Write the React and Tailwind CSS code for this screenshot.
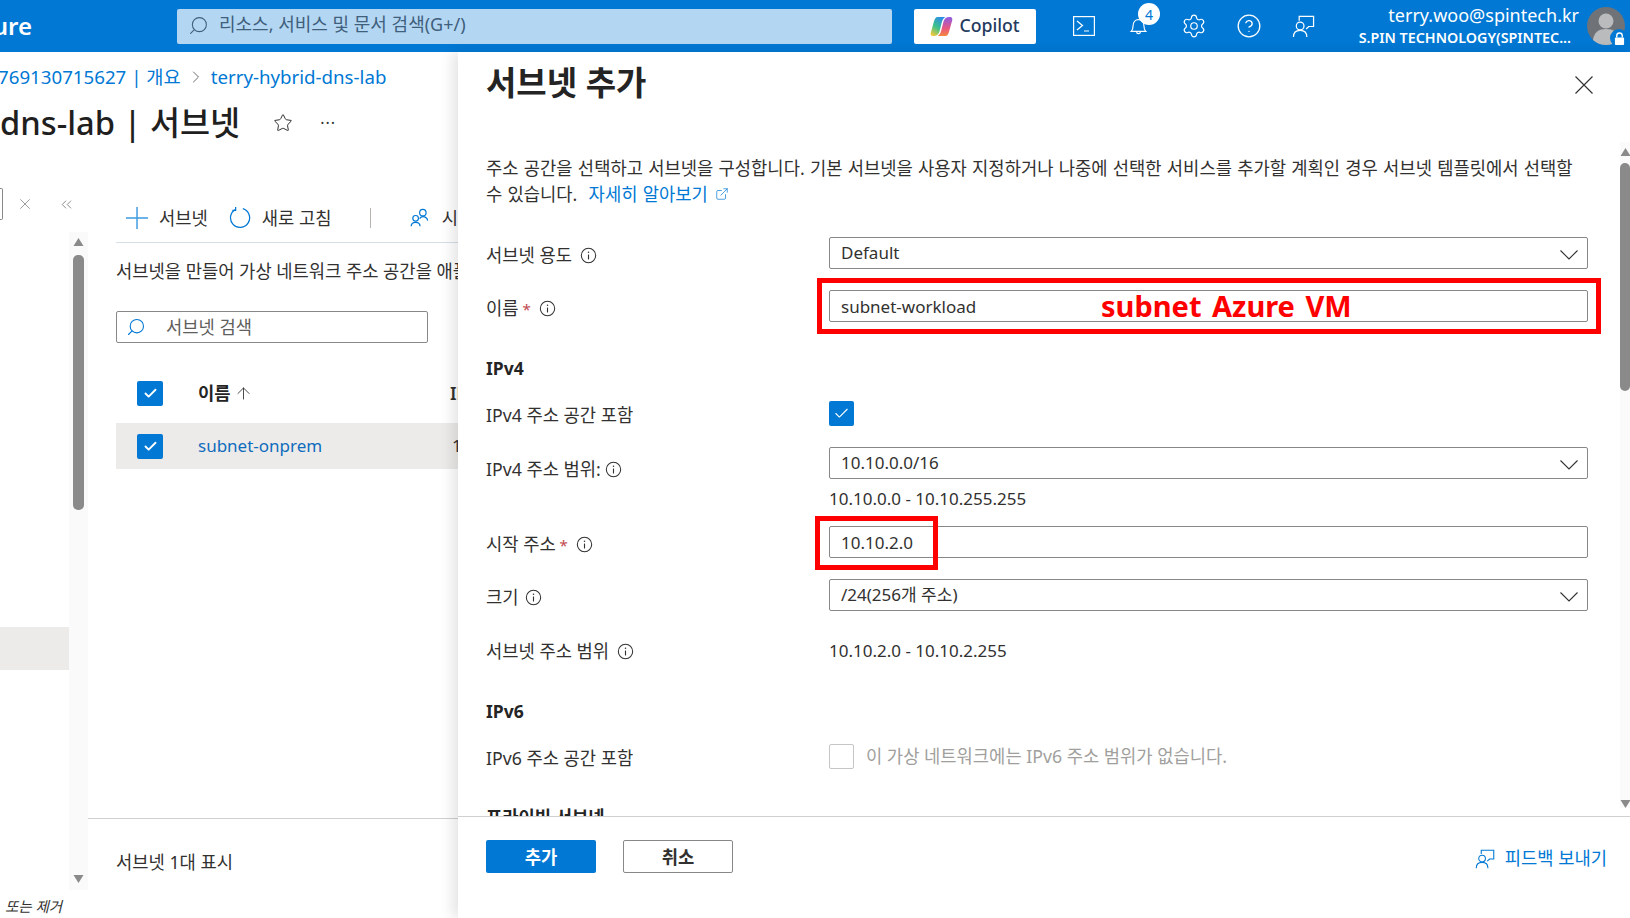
import { Settings, CircleHelp, Star, ChevronsLeft, ChevronRight, Check, Search, ExternalLink, ArrowUp } from 'lucide-react'

function Info() {
  return (
    <svg viewBox="0 0 18 18" className="w-[17px] h-[17px] flex-none text-[#323130]" fill="none" stroke="currentColor">
      <circle cx="9" cy="9" r="7.6" strokeWidth="1.1" />
      <path d="M9 8v5.2" strokeWidth="1.2" />
      <circle cx="9" cy="5.6" r=".8" fill="currentColor" stroke="none" />
    </svg>
  )
}

function FeedbackIcon({ className }) {
  return (
    <svg viewBox="0 0 24 24" className={className} fill="none" stroke="currentColor" strokeWidth="1.3">
      <circle cx="8.5" cy="11.5" r="4" />
      <path d="M1.5 23c0-4.6 3-7 7-7s7 2.4 7 7" />
      <path d="M7.5 6V1.500h15V12h-5l-2.8 2.6" />
    </svg>
  )
}

function Triangle({ down }) {
  return (
    <svg viewBox="0 0 10 8" className="w-[11px] h-[8px] flex-none text-[#8a8a8a]" fill="currentColor">
      <path d={down ? 'M0 0h10L5 8z' : 'M0 8h10L5 0z'} />
    </svg>
  )
}

function CloseIcon({ className }) {
  return (
    <svg viewBox="0 0 18 18" className={className} fill="none" stroke="currentColor" strokeWidth="1.1">
      <path d="M.5.5l17 17M17.500.5l-17 17" />
    </svg>
  )
}

function CheckBox({ small }) {
  return (
    <span className={`flex items-center justify-center flex-none bg-[#0078d4] rounded-[2px] ${small ? 'w-[26px] h-[25px]' : 'w-[25px] h-[25px]'}`}>
      <Check className={`text-white ${small ? 'w-[15px] h-[15px]' : 'w-[17px] h-[17px]'}`} strokeWidth={small ? 3 : 1.5} />
    </span>
  )
}

function Field({ label, required, labelPt = 'pt-[6px]', gap = 'gap-[8px]', children, className = '' }) {
  return (
    <div className={`flex ${className}`}>
      <div className={`w-[343px] flex-none flex items-center h-[24px] box-content ${gap} ${labelPt}`}>
        <span>{label}{required && <span className="text-[#c2484e] text-[15px]"> *</span>}</span>
        <Info />
      </div>
      <div className="w-[759px]">{children}</div>
    </div>
  )
}

function Box({ value, select }) {
  return (
    <div className="h-[32px] border border-[#8a8886] rounded-[2px] pl-[11px] pr-[9px] flex items-center justify-between text-[17px]">
      <span className={select ? '' : 'pt-[2px]'}>{value}</span>
      {select && (
        <svg viewBox="0 0 18 10" className="w-[18px] h-[10px] mt-[3px]" fill="none" stroke="#323130" strokeWidth="1.1">
          <path d="M.5.5L9 9l8.500-8.500" />
        </svg>
      )}
    </div>
  )
}

function Header() {
  return (
    <div className="h-[52px] flex-none bg-[#0078d4] flex items-center text-white">
      <div className="w-[32px] flex-none flex justify-end overflow-hidden text-[24px] font-semibold">
        <span>Azure</span>
      </div>
      <div className="ml-[145px] w-[715px] h-[35px] bg-[#b3d6f2] rounded-[2px] flex items-center pl-[11px] text-[#3f5f7c] text-[18px]">
        <Search className="w-[21px] h-[21px] -mt-[2px] -scale-x-100" strokeWidth={1.2} />
        <span className="ml-[10px] -mt-[3px]">리소스, 서비스 및 문서 검색(G+/)</span>
      </div>
      <div className="ml-[22px] w-[122px] h-[35px] bg-white rounded-[2px] flex items-center justify-center gap-[6px] text-[#243a5e] text-[17.7px] font-medium">
        <svg viewBox="0 0 24 24" className="w-[23px] h-[23px]">
          <defs>
            <linearGradient id="copL" x1="0.7" y1="0" x2="0.2" y2="1">
              <stop offset="0" stopColor="#2b8be8" />
              <stop offset="0.55" stopColor="#3cc28a" />
              <stop offset="1" stopColor="#f5c93a" />
            </linearGradient>
            <linearGradient id="copR" x1="0.5" y1="1" x2="0.5" y2="0">
              <stop offset="0" stopColor="#8a5ce6" />
              <stop offset="0.6" stopColor="#e8567e" />
              <stop offset="1" stopColor="#f58a3c" />
            </linearGradient>
          </defs>
          <path d="M8 2h8c-2 1-3 3-3.800 6L10 17c-.8 3-3 5-6 5H3c-1.800 0-2.700-1.500-2.200-3.500L4 7c1-3.500 2-5 4-5z" fill="url(#copL)" />
          <path d="M8 2h8c-2 1-3 3-3.800 6L10 17c-.8 3-3 5-6 5H3c-1.800 0-2.700-1.500-2.200-3.500L4 7c1-3.500 2-5 4-5z" fill="url(#copR)" transform="rotate(180 12 12)" />
        </svg>
        <span className="-mt-[2px]">Copilot</span>
      </div>
      <div className="ml-[20px] flex h-[52px]">
        <div className="w-[55px] flex justify-center items-center">
          <svg viewBox="0 0 22 20" className="w-[22px] h-[20px]" fill="none" stroke="currentColor" strokeWidth="1.2">
            <rect x=".6" y=".6" width="20.8" height="18.8" />
            <path d="M4 5l5.500 4.500L4 14M11 15h5" />
          </svg>
        </div>
        <div className="w-[55px] flex justify-center items-center relative">
          <svg viewBox="0 0 20 22" className="w-[19px] h-[20px]" fill="none" stroke="currentColor" strokeWidth="1.3">
            <path d="M2 17c1.500-1.500 2-3 2-6 0-4 2.500-7 6-7s6 3 6 7c0 3 .5 4.500 2 6H2zM8 17.500c0 2.500 4 2.500 4 0" />
          </svg>
          <span className="absolute left-[27px] top-[3px] w-[22px] h-[22px] rounded-full bg-white text-[#0078d4] text-[14px] flex items-center justify-center">4</span>
        </div>
        <div className="w-[55px] flex justify-center items-center">
          <Settings className="w-[26px] h-[26px]" strokeWidth={1.1} />
        </div>
        <div className="w-[55px] flex justify-center items-center">
          <CircleHelp className="w-[26px] h-[26px]" strokeWidth={1.2} />
        </div>
        <div className="w-[55px] flex justify-center items-center">
          <FeedbackIcon className="w-[23px] h-[23px]" />
        </div>
      </div>
      <div className="flex-1 flex flex-col items-end leading-[22px] gap-[1px] whitespace-nowrap">
        <span className="text-[18px]">terry.woo@spintech.kr</span>
        <span className="text-[14.3px] font-semibold pr-[8px]">S.PIN TECHNOLOGY(SPINTEC...</span>
      </div>
      <div className="ml-[8px] mr-[5px] relative w-[38px] h-[38px] flex-none rounded-full bg-[#6f7378]">
        <svg viewBox="0 0 38 38" className="w-[38px] h-[38px]">
          <circle cx="19" cy="14" r="7.5" fill="#b9bbbd" />
          <path d="M6 33c1-8 6-11 13-11s12 3 13 11c-3 3-8 5-13 5s-10-2-13-5z" fill="#b9bbbd" />
        </svg>
        <span className="absolute -right-[3px] -bottom-[2px] w-[18px] h-[18px] rounded-full bg-[#0078d4] flex items-center justify-center">
          <svg viewBox="0 0 12 14" className="w-[11px] h-[13px]">
            <path d="M3 6V4a3 3 0 0 1 6 0v2" fill="none" stroke="white" strokeWidth="1.5" />
            <rect x="1" y="6" width="10" height="8" rx="1" fill="white" />
          </svg>
        </span>
      </div>
    </div>
  )
}

function LeftPane() {
  return (
    <div className="w-[458px] flex-none flex flex-col overflow-hidden whitespace-nowrap">
      <div className="mt-[12px] h-[26px] flex items-center text-[#0078d4] text-[18.7px]">
        <span className="-ml-[2px]">769130715627 | 개요</span>
        <ChevronRight className="w-[20px] h-[20px] mx-[5px] text-[#605e5c]" strokeWidth={1.1} />
        <span>terry-hybrid-dns-lab</span>
      </div>
      <div className="mt-[13px] h-[40px] flex items-center">
        <span className="text-[32.7px] font-medium text-[#1f1f1f]">dns-lab | 서브넷</span>
        <Star className="ml-[33px] w-[20px] h-[20px] text-[#323130]" strokeWidth={1.2} />
        <span className="ml-[27px] text-[#323130] text-[16px] tracking-[1px]">···</span>
      </div>
      <div className="mt-[37px] flex-1 flex min-h-0">
        <div className="w-[88px] flex-none flex flex-col">
          <div className="mt-[8px] h-[32px] flex items-center flex-none">
            <span className="w-[3px] h-[32px] border border-l-0 border-[#8a8886] rounded-r-[2px]" />
            <CloseIcon className="ml-[17px] w-[10px] h-[10px] text-[#605e5c]" />
            <ChevronsLeft className="ml-[28px] w-[17px] h-[17px] text-[#605e5c]" strokeWidth={1} />
          </div>
          <div className="mt-[12px] h-[658px] flex flex-none">
            <div className="w-[69px] pt-[395px]">
              <div className="h-[43px] bg-[#edebe9]" />
            </div>
            <div className="w-[19px] bg-[#fafafa] flex flex-col items-center pt-[6px] pb-[7px] pr-[1px]">
              <Triangle />
              <div className="mt-[9px] w-[11px] h-[255px] flex-none rounded-[5px] bg-[#8a8a8a]" />
              <div className="flex-1" />
              <Triangle down />
            </div>
          </div>
          <div className="flex-1 flex items-center italic text-[14.5px] text-[#323130] pl-[5px] pt-[5px]">또는 제거</div>
        </div>
        <div className="flex-1 min-w-0 flex flex-col text-[17.7px] text-[#323130]">
          <div className="mt-[13px] ml-[28px] h-[50px] flex-none border-b border-[#d6dee8] flex items-center pl-[10px]">
            <svg viewBox="0 0 24 24" className="w-[24px] h-[24px] text-[#3f9be0]" fill="none" stroke="currentColor" strokeWidth="1.6">
              <path d="M12 0v24M0 12h24" />
            </svg>
            <span className="ml-[11px] pt-[1px]">서브넷</span>
            <svg viewBox="0 0 24 24" className="ml-[20px] w-[25px] h-[25px] text-[#0078d4]" fill="none" stroke="currentColor" strokeWidth="1.3">
              <path d="M8 3.500a10 10 0 1 0 7.500-.7M8 1v3.500H4.500" />
            </svg>
            <span className="ml-[11px] pt-[1px]">새로 고침</span>
            <span className="ml-[38px] w-px h-[20px] bg-[#b7b3ae]" />
            <svg viewBox="0 0 24 24" className="ml-[40px] w-[21px] h-[21px] text-[#0078d4]" fill="none" stroke="currentColor" strokeWidth="1.5">
              <circle cx="16" cy="6" r="4" />
              <circle cx="7" cy="13" r="3.5" />
              <path d="M1.500 23c0-3 2-5 5.500-5s5.500 2 5.500 5M12 13.500c1-1.500 2.500-2.500 4-2.500 3.500 0 5.500 2 6 5" />
            </svg>
            <span className="ml-[12px] pt-[1px]">시</span>
          </div>
          <div className="mt-[16px] ml-[28px] h-[24px] flex-none flex items-center overflow-hidden">서브넷을 만들어 가상 네트워크 주소 공간을 애플리케이션에 적합한 크기로 분할합니다.</div>
          <div className="mt-[28px] ml-[28px] w-[312px] h-[32px] flex-none border border-[#8a8886] rounded-[2px] flex items-center pl-[9px] text-[#605e5c]">
            <Search className="w-[20px] h-[20px] -scale-x-100 text-[#0078d4]" strokeWidth={1.3} />
            <span className="ml-[20px]">서브넷 검색</span>
          </div>
          <div className="mt-[38px] ml-[28px] h-[24px] flex-none flex items-center pl-[21px]">
            <CheckBox small />
            <span className="ml-[35px] flex-none font-bold text-[#242424] w-[252px] flex items-center gap-[3px]">
              이름
              <ArrowUp className="w-[19px] h-[19px] text-[#323130]" strokeWidth={1.1} />
            </span>
            <span className="flex-none font-semibold">IPv4</span>
          </div>
          <div className="mt-[18px] ml-[28px] h-[46px] flex-none bg-[#edebe9] flex items-center pl-[21px]">
            <CheckBox small />
            <span className="ml-[35px] flex-none text-[#0f6cbd] text-[17px] w-[254px]">subnet-onprem</span>
            <span className="flex-none text-[17px]">10.10.1.0/24</span>
          </div>
          <div className="mt-[349px] border-t border-[#d2d0ce] pl-[28px] pt-[31px] flex-none">
            <span className="block h-[24px] leading-[24px]">서브넷 1대 표시</span>
          </div>
        </div>
      </div>
    </div>
  )
}

function Blade() {
  return (
    <div className="flex-1 min-w-0 relative z-10 bg-white flex flex-col shadow-[-6px_0_12px_rgba(0,0,0,0.1)] text-[17.7px] text-[#323130]">
      <div className="flex-1 min-h-0 flex">
        <div className="flex-1 min-w-0 overflow-hidden pl-[28px] whitespace-nowrap">
          <div className="h-[62px] flex items-center justify-between pr-[27px]">
            <h1 className="text-[33px] font-semibold text-[#242424]">서브넷 추가</h1>
            <CloseIcon className="w-[18px] h-[18px] mt-[4px]" />
          </div>
          <p className="mt-[41px] leading-[26px] [word-spacing:0.65px]">
            주소 공간을 선택하고 서브넷을 구성합니다. 기본 서브넷을 사용자 지정하거나 나중에 선택한 서비스를 추가할 계획인 경우 서브넷 템플릿에서 선택할<br />
            수 있습니다.{' '}
            <span className="text-[#0078d4] ml-[6px] inline-flex items-center gap-[7px]">
              자세히 알아보기
              <ExternalLink className="w-[14px] h-[14px]" strokeWidth={1.2} />
            </span>
          </p>
          <Field label="서브넷 용도" className="mt-[30px]">
            <Box value="Default" select />
          </Field>
          <Field label="이름" required className="mt-[21px]">
            <div className="relative">
              <Box value="subnet-workload" />
              <span className="absolute -left-[12px] -right-[13px] -top-[12px] -bottom-[12px] border-[5px] border-[#ff0000]" />
              <span className="absolute left-[272px] -top-[2px] h-[36px] leading-[36px] text-[29px] font-bold text-[#ff0000] [word-spacing:3px]">subnet Azure VM</span>
            </div>
          </Field>
          <div className="mt-[34px] h-[24px] leading-[24px] font-bold text-[#242424] text-[17.5px]">IPv4</div>
          <div className="mt-[21px] h-[25px] flex">
            <div className="w-[343px] flex-none leading-[29px]">IPv4 주소 공간 포함</div>
            <CheckBox />
          </div>
          <Field label="IPv4 주소 범위:" labelPt="pt-[10px]" gap="gap-[4px]" className="mt-[21px]">
            <Box value="10.10.0.0/16" select />
            <div className="mt-[8px] h-[24px] leading-[24px] text-[17px]">10.10.0.0 - 10.10.255.255</div>
          </Field>
          <Field label="시작 주소" required className="mt-[15px]">
            <div className="relative">
              <Box value="10.10.2.0" />
              <span className="absolute -left-[14px] -top-[10px] w-[123px] h-[54px] border-[5px] border-[#ff0000]" />
            </div>
          </Field>
          <Field label="크기" gap="gap-[6px]" className="mt-[21px]">
            <Box value="/24(256개 주소)" select />
          </Field>
          <Field label="서브넷 주소 범위" labelPt="" className="mt-[28px]">
            <div className="h-[24px] leading-[24px] text-[17px]">10.10.2.0 - 10.10.2.255</div>
          </Field>
          <div className="mt-[36px] h-[24px] leading-[24px] font-bold text-[#242424] text-[17.5px]">IPv6</div>
          <div className="mt-[21px] h-[24px] flex">
            <div className="w-[343px] flex-none leading-[28px]">IPv6 주소 공간 포함</div>
            <span className="w-[25px] h-[25px] flex-none border border-[#c8c6c4] rounded-[2px]" />
            <span className="ml-[12px] text-[#a19f9d] leading-[24px]">이 가상 네트워크에는 IPv6 주소 범위가 없습니다.</span>
          </div>
          <div className="mt-[37px] h-[24px] leading-[24px] font-bold text-[#242424]">프라이빗 서브넷</div>
        </div>
        <div className="w-[10px] flex-none mt-[90px] mb-[8px] bg-[#fafafa] flex flex-col items-center pt-[6px]">
          <Triangle />
          <div className="mt-[7px] w-[10px] h-[228px] flex-none rounded-[5px] bg-[#8a8a8a]" />
          <div className="flex-1" />
          <Triangle down />
        </div>
      </div>
      <div className="h-[102px] flex-none border-t border-[#d2d0ce] flex items-start pt-[23px] pl-[28px] pr-[23px]">
        <button className="w-[110px] h-[33px] pt-[1px] bg-[#0078d4] text-white rounded-[2px] font-semibold">추가</button>
        <button className="ml-[27px] w-[110px] h-[33px] pt-[1px] border border-[#8a8886] rounded-[2px] font-semibold">취소</button>
        <div className="ml-auto h-[33px] mt-[2px] flex items-center gap-[10px] text-[#0078d4]">
          <FeedbackIcon className="w-[20px] h-[20px]" />
          <span>피드백 보내기</span>
        </div>
      </div>
    </div>
  )
}

export default function App() {
  return (
    <div className="w-[1630px] h-[918px] overflow-hidden bg-white flex flex-col font-['Noto_Sans','Noto_Sans_CJK_KR',sans-serif]">
      <Header />
      <div className="flex-1 min-h-0 flex">
        <LeftPane />
        <Blade />
      </div>
    </div>
  )
}
